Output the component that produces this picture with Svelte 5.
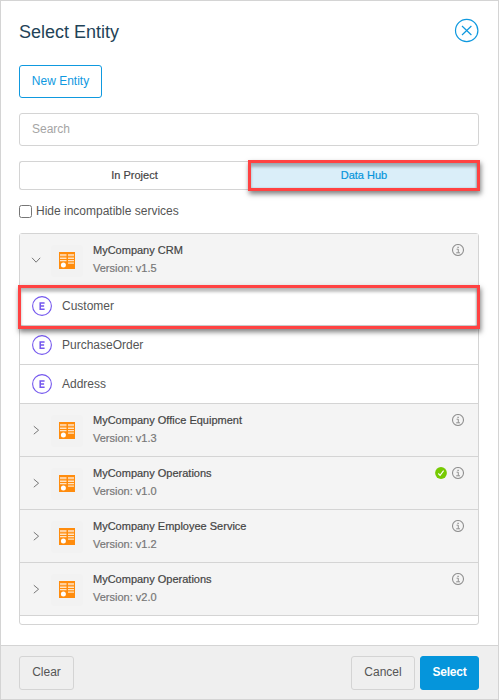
<script>
  const entities = ['Customer', 'PurchaseOrder', 'Address'];
  const services = [
    { name: 'MyCompany CRM', version: 'v1.5', open: true },
    { name: 'MyCompany Office Equipment', version: 'v1.3' },
    { name: 'MyCompany Operations', version: 'v1.0', checked: true },
    { name: 'MyCompany Employee Service', version: 'v1.2' },
    { name: 'MyCompany Operations', version: 'v2.0' }
  ];
</script>

<div class="dialog">
  <main>
    <header>
      <h1>Select Entity</h1>
      <svg class="close" width="24" height="24" viewBox="0 0 24 24" fill="none" stroke="#0f99df" stroke-width="1.2">
        <circle cx="11.7" cy="13.5" r="11.2" />
        <path d="M7 9l9.4 9M16.4 9l-9.4 9" />
      </svg>
    </header>
    <button class="btn new">New Entity</button>
    <input class="search" type="text" placeholder="Search" />
    <div class="tabs">
      <div class="tab">In Project</div>
      <div class="tab active">Data Hub<span class="mark"></span></div>
    </div>
    <label class="hide"><span class="box"></span>Hide incompatible services</label>

    <div class="tree">
      {#each services as s}
        <div class="service">
          <svg class="chev" width="10" height="10" viewBox="0 0 10 10" fill="none" stroke="#777" stroke-width="1">
            {#if s.open}
              <path d="M1 2.8l4.1 4.4l4.1-4.4" />
            {:else}
              <path d="M2.8 1.2l4.8 4l-4.8 4" />
            {/if}
          </svg>
          <span class="tile">
            <svg width="16" height="17" viewBox="0 0 16 17">
              <rect width="16" height="17" fill="#ff8c0d" />
              <path d="M1 2h6.5v2.3H1zM9 2h6v2.3H9z" fill="#ffcf9c" />
              <path d="M1 5.4h6.5v1.5H1zM9 5.4h6v1.5H9zM1 8h6.5v1.2H1zM9 8h6v1.2H9zM9 10.6h6v1.2H9z" fill="#ffe3c4" />
              <circle cx="4.4" cy="12.9" r="2.5" fill="#fff" />
            </svg>
          </span>
          <div class="info">
            <div class="name">{s.name}</div>
            <div class="version">Version: {s.version}</div>
          </div>
          <div class="status">
            {#if s.checked}
              <svg width="12" height="12" viewBox="0 0 12 12">
                <circle cx="6" cy="6" r="5.9" fill="#76ca02" />
                <path d="M3.3 6.5l1.8 1.8l3.5-4.6" fill="none" stroke="#fff" stroke-width="1.1" />
              </svg>
            {/if}
            <svg width="12" height="12" viewBox="0 0 12 12" fill="none" stroke="#929292">
              <circle cx="6" cy="6" r="5.5" stroke-width="1.1" />
              <path d="M4.6 5.2h1.7v3.6M4.2 8.8h3.8" stroke-width="1" />
              <path d="M5.4 3.3h1.4" stroke-width="1.2" />
            </svg>
          </div>
        </div>
        {#if s.open}
          {#each entities as e, i}
            <div class="entity">
              <svg width="20" height="20" viewBox="0 0 20 20" fill="none" stroke="#7457ee">
                <circle cx="10" cy="10" r="9.4" stroke-width="1.1" />
                <path d="M12.6 6.9H8.2v6.3h4.4M8.2 10h3.9" stroke-width="1.5" />
              </svg>
              <span>{e}</span>
              {#if i === 0}<span class="mark"></span>{/if}
            </div>
          {/each}
        {/if}
      {/each}
    </div>
  </main>
  <footer>
    <button class="btn clear">Clear</button>
    <div class="actions">
      <button class="btn cancel">Cancel</button>
      <button class="btn primary">Select</button>
    </div>
  </footer>
</div>

<style>
  :global(body) { margin: 0; background: #fff; }
  .dialog, .dialog * { box-sizing: border-box; }
  .dialog {
    display: flex;
    flex-direction: column;
    width: 499px;
    height: 700px;
    border: 1px solid #d4d4d4;
    background: #fff;
    color: #555;
    font: 12px/16px "Liberation Sans", Arial, sans-serif;
  }
  main { flex: 1; padding: 17px 19px 0 18px; }
  header { display: flex; justify-content: space-between; height: 47px; }
  h1 { margin: 2px 0 0; font-size: 18px; line-height: 24px; font-weight: 400; color: #1f4358; }
  .close { margin-top: -1px; overflow: visible; }
  .btn {
    display: block;
    height: 34px;
    padding: 0 0 2px;
    border: 1px solid #d4d4d4;
    border-radius: 3px;
    background: transparent;
    color: #555;
    font: inherit;
    white-space: nowrap;
  }
  .new { width: 83px; height: 33px; border-color: #0f99df; background: #fff; color: #0f99df; }
  .search {
    display: block;
    width: 100%;
    height: 33px;
    margin-top: 15px;
    padding: 0 12px 2px;
    border: 1px solid #d4d4d4;
    border-radius: 3px;
    font: inherit;
  }
  .search::placeholder { color: #a5a5a5; opacity: 1; }
  .tabs { display: flex; height: 29px; margin-top: 15px; font-size: 11px; color: #444; -webkit-text-stroke: 0.2px; }
  .tab {
    position: relative;
    width: 230px;
    border: 1px solid #d4d4d4;
    border-right: 0;
    border-radius: 3px 0 0 3px;
    text-align: center;
    line-height: 26px;
  }
  .active { border: 1px solid #0f99df; border-radius: 0 3px 3px 0; background: #daeef9; color: #0595db; }
  .mark {
    position: absolute;
    z-index: 2;
    inset: -2px;
    border: 3px solid #ff4242;
    box-shadow: 1px 3px 5px rgba(0, 0, 0, 0.5), inset 0 4px 3px rgba(0, 0, 0, 0.25), inset -1px 0 2px rgba(0, 0, 0, 0.2);
  }
  .entity .mark { bottom: -4px; }
  .hide { display: flex; align-items: center; height: 16px; margin-top: 13px; }
  .box { width: 13px; height: 13px; margin-right: 4px; border: 1px solid #767676; border-radius: 2.5px; background: #fff; }
  .tree { height: 392px; margin-top: 14px; border: 1px solid #d4d4d4; border-radius: 3px; }
  .service {
    display: flex;
    align-items: center;
    height: 53px;
    padding: 0 14px 0 11px;
    border-bottom: 1px solid #d4d4d4;
    background: #f4f4f4;
  }
  .tile {
    display: flex;
    align-items: center;
    justify-content: center;
    width: 32px;
    height: 32px;
    margin: 1px 10px 0;
    border-radius: 2px;
    background: #f2f2f2;
  }
  .info { flex: 1; font-size: 11px; line-height: 18px; margin-top: -3px; -webkit-text-stroke: 0.2px; }
  .name { color: #444; }
  .version { color: #777; }
  .status { display: flex; align-self: flex-start; align-items: center; gap: 5px; height: 12px; margin-top: 10px; }
  .entity {
    position: relative;
    display: flex;
    align-items: center;
    gap: 10px;
    height: 39px;
    padding-left: 12px;
    border-bottom: 1px solid #d4d4d4;
  }
  footer {
    display: flex;
    justify-content: space-between;
    height: 54px;
    padding: 10px 19px 0 18px;
    border-top: 1px solid #d4d4d4;
    background: #efefef;
  }
  .actions { display: flex; gap: 5px; }
  .clear { width: 55px; }
  .cancel { width: 64px; }
  .primary { width: 59px; border-color: #0595db; background: #0595db; color: #fff; font-weight: 700; letter-spacing: -0.2px; }
</style>
